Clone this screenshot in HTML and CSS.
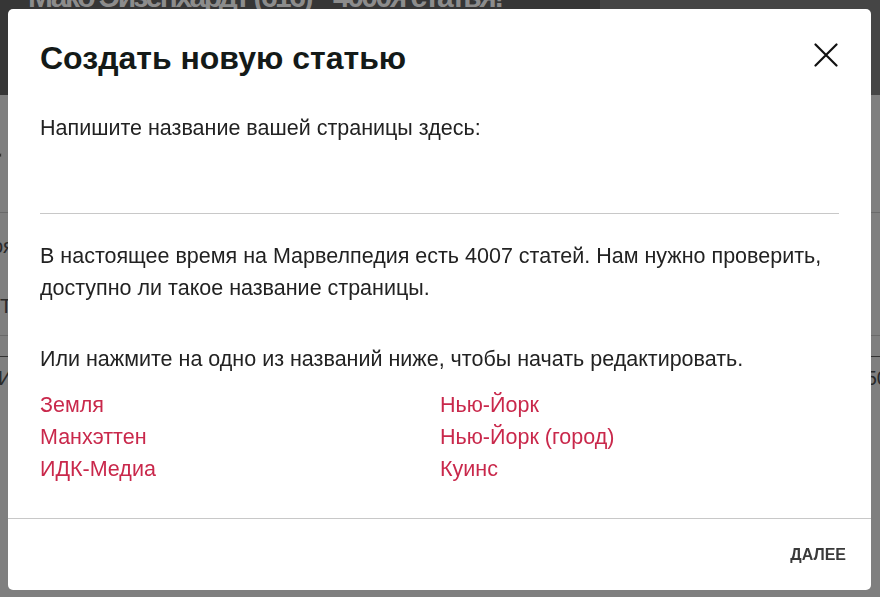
FILE: index.html
```html
<!DOCTYPE html>
<html lang="ru">
<head>
<meta charset="utf-8">
<title>Создать новую статью</title>
<link rel="stylesheet" href="styles.css">
</head>
<body>
<div class="page">
  <header class="page-head">
    <div class="page-title"><span class="t1">Мако Эйзенхардт (616)</span><span class="t2">4000я статья!</span></div>
    <div class="page-photo"></div>
  </header>
  <div class="page-body">
    <div class="page-big">а</div>
    <div class="page-rule"></div>
    <div class="page-row">оя</div>
    <div class="page-row t">Т</div>
    <div class="page-rule r2"></div>
    <div class="page-rule r3"></div>
    <div class="page-row i">И<span class="num">50</span></div>
  </div>
</div>

<div class="overlay">
  <div class="modal">
    <div class="modal-head">
      <h2 class="modal-title">Создать новую статью</h2>
      <button class="close" aria-label="Закрыть">
        <svg width="24" height="24" viewBox="0 0 24 24"><path d="M1.5 1.5 L22.5 22.5 M22.5 1.5 L1.5 22.5" stroke="#111" stroke-width="2.2" stroke-linecap="round" fill="none"/></svg>
      </button>
    </div>
    <div class="modal-body">
      <label class="label">Напишите название вашей страницы здесь:</label>
      <div class="field"></div>
      <p class="info">В настоящее время на Марвелпедия есть 4007 статей. Нам нужно проверить, доступно ли такое название страницы.</p>
      <p class="hint">Или нажмите на одно из названий ниже, чтобы начать редактировать.</p>
      <div class="links">
        <a class="link">Земля</a>
        <a class="link">Нью-Йорк</a>
        <a class="link">Манхэттен</a>
        <a class="link">Нью-Йорк (город)</a>
        <a class="link">ИДК-Медиа</a>
        <a class="link">Куинс</a>
      </div>
    </div>
    <div class="modal-foot">
      <button class="next">ДАЛЕЕ</button>
    </div>
  </div>
</div>
</body>
</html>
```
FILE: styles.css
```css
* { box-sizing: border-box; }
html, body { margin: 0; padding: 0; }
body {
  width: 880px;
  height: 597px;
  overflow: hidden;
  background: #7f7f7f;
  font-family: "Liberation Sans", Arial, sans-serif;
}
.page { width: 880px; height: 597px; overflow: hidden; }
.page-head {
  height: 95px;
  background: #363636;
  display: flex;
  overflow: hidden;
}
.page-title {
  margin-top: -20px;
  padding-left: 28px;
  font-size: 30px;
  font-weight: bold;
  color: #8c8c8c;
  white-space: nowrap;
  flex: 0 0 600px;
  letter-spacing: -2.5px;
  overflow: hidden;
  display: flex;
}
.t1 { flex: 0 0 auto; }
.t2 { margin-left: 22px; }
.page-photo {
  flex: 1;
  background: #454545;
}
.page-body { color: #2a2a2a; font-size: 20px; }
.page-big { font-size: 56px; margin-left: -30px; height: 117px; padding-top: 10px; color: #333; }
.page-rule { height: 1px; background: #6a6a6a; }
.page-row { height: 60px; padding-top: 22px; margin-left: -8px; }
.page-row.t { height: 62px; margin-left: 0; }
.r2 { margin-bottom: 20px; }
.r3 { background: #333; }
.page-row.i { display: flex; justify-content: space-between; margin-left: -2px; margin-right: -8px; padding-top: 10px; }

.overlay {
  position: fixed;
  inset: 0;
}
.modal {
  position: absolute;
  left: 8px;
  top: 9px;
  width: 863px;
  height: 581px;
  background: #fff;
  border-radius: 5px;
  display: flex;
  flex-direction: column;
}
.modal-head {
  display: flex;
  justify-content: space-between;
  align-items: center;
  padding: 31px 32px 0 32px;
}
.modal-title {
  margin: 0;
  font-size: 32px;
  line-height: 36px;
  font-weight: bold;
  color: #141a18;
}
.close {
  border: 0;
  background: none;
  padding: 0;
  margin-right: 1px;
  margin-top: -7px;
  width: 24px;
  height: 24px;
  display: flex;
}
.modal-body {
  flex: 1;
  padding: 36px 32px 0 32px;
  font-size: 21.5px;
  line-height: 32px;
  color: #222;
}
.label { display: block; }
.field {
  height: 70px;
  border-bottom: 1px solid #c8c8c8;
}
.info { margin: 26px 0 0 0; }
.hint { margin: 39px 0 0 0; }
.links {
  margin-top: 14px;
  display: grid;
  grid-template-columns: 400px 1fr;
}
.link { color: #c9284b; text-decoration: none; }
.modal-foot {
  height: 72px;
  border-top: 1px solid #c8c8c8;
  display: flex;
  justify-content: flex-end;
  align-items: center;
  padding-right: 25px;
}
.next {
  border: 0;
  background: none;
  padding: 0;
  font-family: "Liberation Sans", Arial, sans-serif;
  font-size: 16px;
  font-weight: bold;
  color: #3a3a3a;
}
```
